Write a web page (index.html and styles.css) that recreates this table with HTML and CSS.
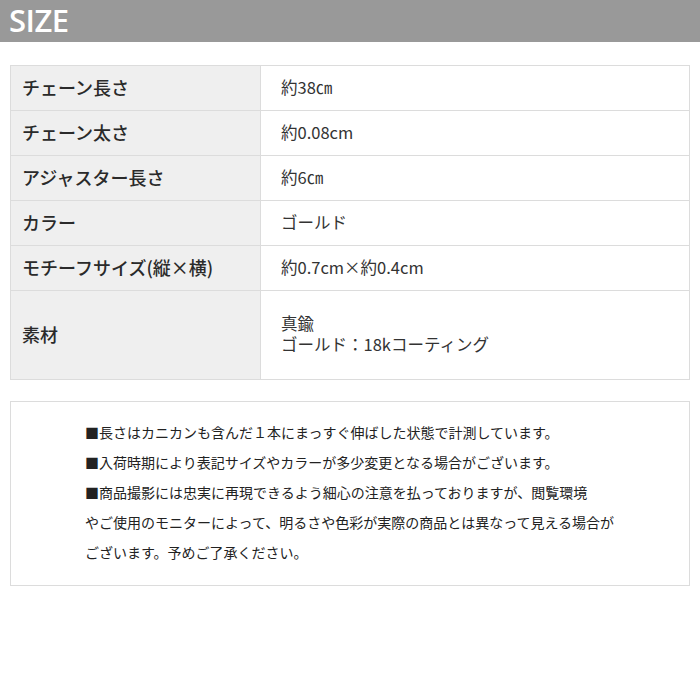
FILE: index.html
```html
<!DOCTYPE html>
<html lang="ja">
<head>
<meta charset="utf-8">
<link rel="stylesheet" href="styles.css">
</head>
<body>
<div class="title">SIZE</div>
<table class="spec">
  <tr><th>チェーン長さ</th><td>約38㎝</td></tr>
  <tr><th>チェーン太さ</th><td>約0.08cm</td></tr>
  <tr><th>アジャスター長さ</th><td>約6㎝</td></tr>
  <tr><th>カラー</th><td>ゴールド</td></tr>
  <tr><th>モチーフサイズ(縦×横)</th><td>約0.7cm×約0.4cm</td></tr>
  <tr class="tall"><th>素材</th><td><div class="line">真鍮</div><div class="line">ゴールド：18kコーティング</div></td></tr>
</table>
<div class="notes">
  <p>■長さはカニカンも含んだ１本にまっすぐ伸ばした状態で計測しています。</p>
  <p>■入荷時期により表記サイズやカラーが多少変更となる場合がございます。</p>
  <p>■商品撮影には忠実に再現できるよう細心の注意を払っておりますが、閲覧環境<br>やご使用のモニターによって、明るさや色彩が実際の商品とは異なって見える場合が<br>ございます。予めご了承ください。</p>
</div>
</body>
</html>
```
FILE: styles.css
```css
html, body {
  margin: 0;
  padding: 0;
  background: #fff;
}
body {
  width: 700px;
  font-family: "Noto Sans CJK JP", "Noto Sans", sans-serif;
  color: #333;
}
.title {
  height: 42px;
  background: #999;
  color: #fff;
  font-family: "Open Sans", sans-serif;
  font-weight: 600;
  font-size: 31px;
  line-height: 40px;
  padding-left: 9px;
  letter-spacing: -0.5px;
}
.spec {
  margin: 23px 0 0 10px;
  width: 680px;
  border-collapse: collapse;
  border: 1px solid #d4d4d4;
}
.spec th, .spec td {
  border: 1px solid #dcdcdc;
  height: 45px;
  padding: 0 0 3px 0;
  box-sizing: border-box;
  vertical-align: middle;
  text-align: left;
}
.spec th {
  width: 250px;
  background: #efefef;
  font-weight: 500;
  font-size: 18px;
  padding-left: 11px;
  color: #2a2a2a;
}
.spec td {
  font-size: 16.5px;
  padding-left: 20px;
  color: #333;
  line-height: 20px;
}
.spec .line {
  line-height: 21px;
}
.spec tr.tall th, .spec tr.tall td {
  height: 89px;
}
.notes {
  margin: 21px 0 0 10px;
  border: 1px solid #dcdcdc;
  padding: 15px 0 18px 74px;
  box-sizing: border-box;
  width: 680px;
  font-family: "Noto Sans CJK JP", sans-serif;
  font-size: 14px;
  line-height: 30px;
  color: #222;
}
.notes p {
  margin: 0;
}
```
